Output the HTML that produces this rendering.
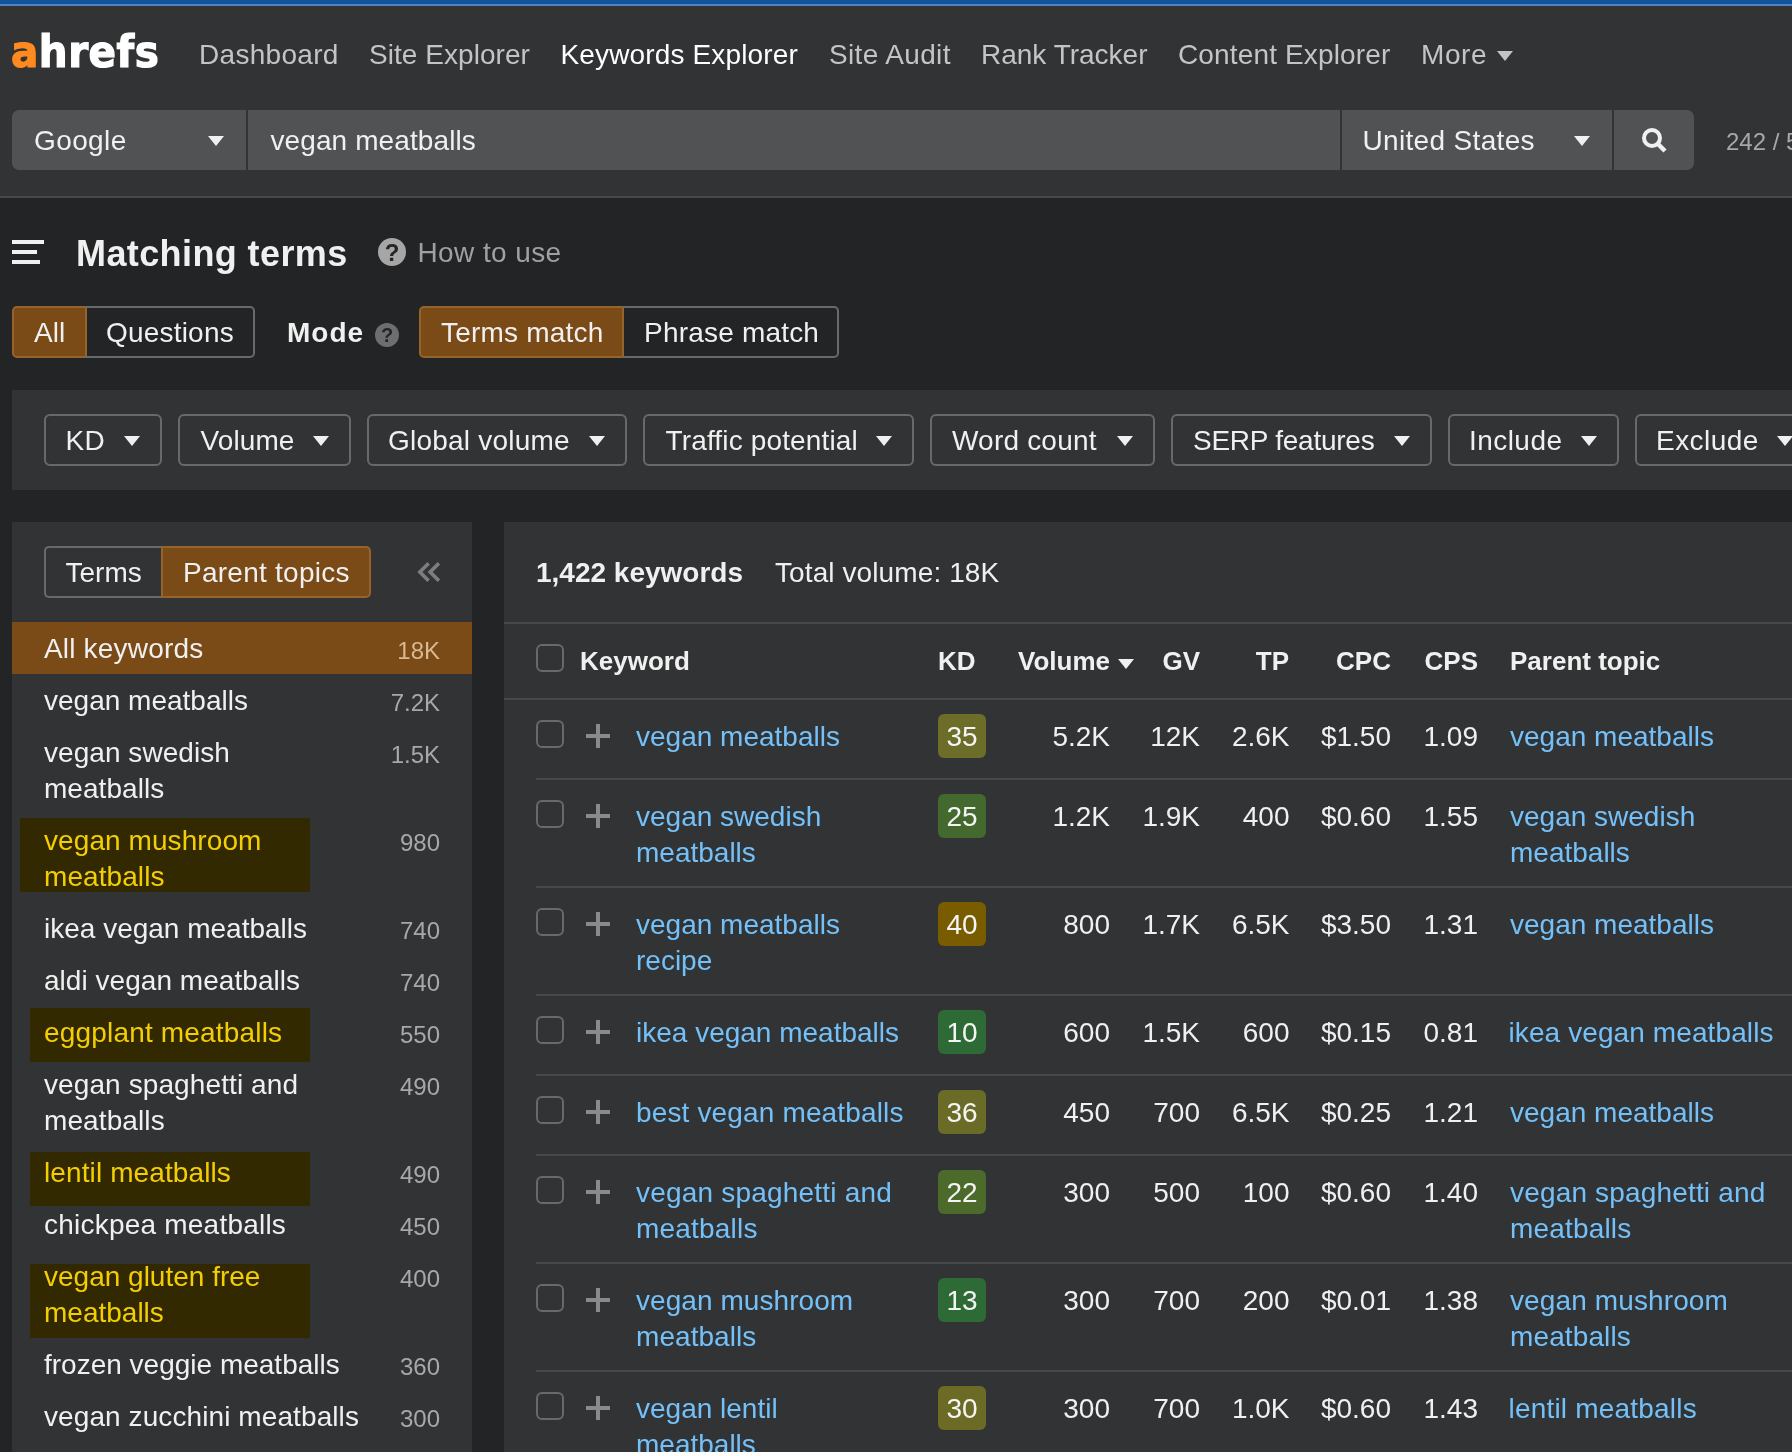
<!DOCTYPE html>
<html><head><meta charset="utf-8"><title>Keywords Explorer</title>
<style>
*{box-sizing:border-box;margin:0;padding:0}
html,body{width:1792px;height:1452px;overflow:hidden;background:#232426}
body{position:relative;font-family:"Liberation Sans",Arial,Helvetica,sans-serif;font-size:28px;color:#f0f0f0;line-height:36px}
.abs{position:absolute}
#app{position:absolute;left:0;top:0;width:1792px;height:1452px;will-change:transform}
.topbar{left:0;top:0;width:1792px;height:6px;background:#13559d;border-bottom:2px solid #4e85c2}
.header{left:0;top:6px;width:1792px;height:192px;background:#323335;border-bottom:2px solid #47484a}
.nav{white-space:nowrap;color:#c4c4c4;line-height:36px}
.nav.act{color:#fff}
.sbox{top:110px;height:60px;background:#515254}
.t{white-space:nowrap;line-height:36px}
.tri{width:0;height:0;border-left:8px solid transparent;border-right:8px solid transparent;border-top:10px solid #f0f0f0}
.seg{height:52px;border:2px solid #68696b}
.seg.on{background:#7a4a17;border-color:#96642b}
.fbtn{top:414px;height:52px;border:2px solid #68696b;border-radius:6px}
.panel{background:#323335}
.q{border-radius:50%;text-align:center;font-weight:bold;color:#242527}
.lrow{left:44px;white-space:nowrap;line-height:36px;color:#f0f0f0}
.lnum{right:1352px;white-space:nowrap;line-height:36px;color:#a8a8a8;font-size:24px;text-align:right}
.hl{background:#322900}
.y{color:#f3ce05}
.hline{height:2px;background:#47484a}
.cb{width:28px;height:28px;border:2px solid #68696b;border-radius:6px;left:536px}
.plus{left:586px;width:24px;height:24px}
.plus:before{content:"";position:absolute;left:0;top:10px;width:24px;height:4px;background:#8a8a8a}
.plus:after{content:"";position:absolute;left:10px;top:0;width:4px;height:24px;background:#8a8a8a}
.kw{left:636px;color:#74c0f8;line-height:36px;white-space:nowrap}
.pt{left:1510px;color:#74c0f8;line-height:36px;white-space:nowrap}
.kd{left:938px;width:48px;height:44px;border-radius:6px}
.kdt{left:938px;width:48px;text-align:center;color:#f4f4f4;line-height:36px}
.num{white-space:nowrap;line-height:36px;text-align:right;color:#f0f0f0}
.th{font-weight:bold;font-size:26px;white-space:nowrap;line-height:36px;color:#f0f0f0}
</style></head><body>
<div id="app">
<div class="abs topbar"></div>
<div class="abs header"></div>
<div class="abs" id="logo" style="left:11px;top:22px;font-family:'DejaVu Sans Condensed','DejaVu Sans','Liberation Sans',sans-serif;font-size:45px;line-height:60px;font-weight:bold;color:#fff;letter-spacing:0.5px;-webkit-text-stroke:1.2px;white-space:nowrap"><span style="color:#ff8a1f">a</span>hrefs</div>
<div class="abs nav" style="left:199px;top:37px;letter-spacing:0.3px">Dashboard</div>
<div class="abs nav" style="left:369px;top:37px;letter-spacing:0.05px">Site Explorer</div>
<div class="abs nav act" style="left:560.5px;top:37px;letter-spacing:0.14px">Keywords Explorer</div>
<div class="abs nav" style="left:829px;top:37px;letter-spacing:0.35px">Site Audit</div>
<div class="abs nav" style="left:981px;top:37px;letter-spacing:0px">Rank Tracker</div>
<div class="abs nav" style="left:1178px;top:37px;letter-spacing:0.15px">Content Explorer</div>
<div class="abs nav" style="left:1421px;top:37px;letter-spacing:0.6px">More</div>
<div class="abs tri" style="left:1497px;top:51px;border-top-color:#c4c4c4"></div>
<div class="abs sbox" style="left:12px;width:234px;border-radius:7px 0 0 7px"></div>
<div class="abs sbox" style="left:248px;width:1092px"></div>
<div class="abs sbox" style="left:1342px;width:270px"></div>
<div class="abs sbox" style="left:1614px;width:80px;border-radius:0 7px 7px 0"></div>
<div class="abs t" style="left:34px;top:123px;letter-spacing:0.4px">Google</div>
<div class="abs t" style="left:270.5px;top:123px;letter-spacing:0.1px">vegan meatballs</div>
<div class="abs t" style="left:1362.5px;top:123px;letter-spacing:0.33px">United States</div>
<div class="abs tri" style="left:208px;top:136px"></div>
<div class="abs tri" style="left:1574px;top:136px"></div>
<svg class="abs" style="left:1640px;top:126px" width="30" height="30" viewBox="0 0 30 30"><circle cx="12" cy="12" r="8" fill="none" stroke="#f0f0f0" stroke-width="4"/><path d="M17.5 17.5 L25 25" stroke="#f0f0f0" stroke-width="4.5"/></svg>
<div class="abs t" style="left:1726px;top:124px;font-size:24px;color:#a8a8a8">242 / 500</div>
<div class="abs" style="left:12px;top:240px;width:32px;height:4px;background:#f0f0f0"></div>
<div class="abs" style="left:12px;top:250px;width:25px;height:4px;background:#f0f0f0"></div>
<div class="abs" style="left:12px;top:260px;width:28px;height:4px;background:#f0f0f0"></div>
<div class="abs t" style="left:76px;top:232px;font-size:36px;line-height:44px;font-weight:bold;letter-spacing:0.4px">Matching terms</div>
<div class="abs q" style="left:378px;top:238px;width:28px;height:28px;background:#a6a6a6;font-size:24px;line-height:29px">?</div>
<div class="abs t" style="left:417.5px;top:235px;color:#a0a0a0;letter-spacing:0.4px">How to use</div>
<div class="abs seg on" style="left:12px;top:306px;width:75px;border-radius:5px 0 0 5px"></div>
<div class="abs seg" style="left:85px;top:306px;width:170px;border-radius:0 5px 5px 0;border-left:0"></div>
<div class="abs t" style="left:34px;top:315px;">All</div>
<div class="abs t" style="left:106px;top:315px;letter-spacing:0.2px">Questions</div>
<div class="abs t" style="left:287px;top:315px;font-weight:bold;letter-spacing:1px">Mode</div>
<div class="abs q" style="left:375px;top:323px;width:24px;height:24px;background:#6e6e70;font-size:20px;line-height:25px">?</div>
<div class="abs seg on" style="left:419px;top:306px;width:205px;border-radius:5px 0 0 5px"></div>
<div class="abs seg" style="left:622px;top:306px;width:217px;border-radius:0 5px 5px 0;border-left:0"></div>
<div class="abs t" style="left:441px;top:315px;letter-spacing:0.2px">Terms match</div>
<div class="abs t" style="left:644px;top:315px;letter-spacing:0.2px">Phrase match</div>
<div class="abs panel" style="left:12px;top:390px;width:1780px;height:100px"></div>
<div class="abs fbtn" style="left:44px;width:118px"></div>
<div class="abs t" style="left:65.5px;top:423px;letter-spacing:0.3px">KD</div>
<div class="abs tri" style="left:124px;top:436px"></div>
<div class="abs fbtn" style="left:178px;width:173px"></div>
<div class="abs t" style="left:200.5px;top:423px;letter-spacing:0.1px">Volume</div>
<div class="abs tri" style="left:313px;top:436px"></div>
<div class="abs fbtn" style="left:367px;width:260px"></div>
<div class="abs t" style="left:388px;top:423px;letter-spacing:0.22px">Global volume</div>
<div class="abs tri" style="left:589px;top:436px"></div>
<div class="abs fbtn" style="left:643px;width:271px"></div>
<div class="abs t" style="left:665.5px;top:423px;letter-spacing:0.15px">Traffic potential</div>
<div class="abs tri" style="left:876px;top:436px"></div>
<div class="abs fbtn" style="left:930px;width:225px"></div>
<div class="abs t" style="left:952px;top:423px;letter-spacing:0.2px">Word count</div>
<div class="abs tri" style="left:1117px;top:436px"></div>
<div class="abs fbtn" style="left:1171px;width:261px"></div>
<div class="abs t" style="left:1193px;top:423px;letter-spacing:-0.25px">SERP features</div>
<div class="abs tri" style="left:1394px;top:436px"></div>
<div class="abs fbtn" style="left:1448px;width:171px"></div>
<div class="abs t" style="left:1469px;top:423px;letter-spacing:0.45px">Include</div>
<div class="abs tri" style="left:1581px;top:436px"></div>
<div class="abs fbtn" style="left:1635px;width:180px"></div>
<div class="abs t" style="left:1656px;top:423px;letter-spacing:0.45px">Exclude</div>
<div class="abs tri" style="left:1777px;top:436px"></div>
<div class="abs panel" style="left:12px;top:522px;width:460px;height:930px"></div>
<div class="abs seg" style="left:44px;top:546px;width:119px;border-radius:5px 0 0 5px;border-right:0"></div>
<div class="abs seg on" style="left:161px;top:546px;width:210px;border-radius:0 5px 5px 0"></div>
<div class="abs t" style="left:65.5px;top:555px;">Terms</div>
<div class="abs t" style="left:183px;top:555px;letter-spacing:0.25px">Parent topics</div>
<svg class="abs" style="left:410px;top:556px" width="40" height="32" viewBox="410 556 40 32"><path d="M428.6 563.3 L419.9 572 L428.6 580.7 M438.9 563.3 L430.2 572 L438.9 580.7" fill="none" stroke="#7d7d7f" stroke-width="3.7"/></svg>
<div class="abs" style="left:12px;top:622px;width:460px;height:52px;background:#7a4a17"></div>
<div class="abs hl" style="left:20px;top:818px;width:290px;height:74px"></div>
<div class="abs hl" style="left:30px;top:1008px;width:280px;height:54px"></div>
<div class="abs hl" style="left:30px;top:1152px;width:280px;height:54px"></div>
<div class="abs hl" style="left:30px;top:1264px;width:280px;height:74px"></div>
<div class="abs lrow" style="left:44px;top:631px;letter-spacing:0.18px">All keywords</div>
<div class="abs lnum" style="right:1352px;top:633px;color:#d9b98f">18K</div>
<div class="abs lrow" style="left:44px;top:683px;">vegan meatballs</div>
<div class="abs lnum" style="right:1352px;top:685px;">7.2K</div>
<div class="abs lrow" style="left:44px;top:735px;letter-spacing:0.05px">vegan swedish<br>meatballs</div>
<div class="abs lnum" style="right:1352px;top:737px;">1.5K</div>
<div class="abs lrow y" style="left:44px;top:823px;letter-spacing:0.08px">vegan mushroom<br>meatballs</div>
<div class="abs lnum" style="right:1352px;top:825px;">980</div>
<div class="abs lrow" style="left:44px;top:911px;">ikea vegan meatballs</div>
<div class="abs lnum" style="right:1352px;top:913px;">740</div>
<div class="abs lrow" style="left:44px;top:963px;letter-spacing:0.04px">aldi vegan meatballs</div>
<div class="abs lnum" style="right:1352px;top:965px;">740</div>
<div class="abs lrow y" style="left:44px;top:1015px;letter-spacing:0.18px">eggplant meatballs</div>
<div class="abs lnum" style="right:1352px;top:1017px;">550</div>
<div class="abs lrow" style="left:44px;top:1067px;letter-spacing:0.1px">vegan spaghetti and<br>meatballs</div>
<div class="abs lnum" style="right:1352px;top:1069px;">490</div>
<div class="abs lrow y" style="left:44px;top:1155px;letter-spacing:0.11px">lentil meatballs</div>
<div class="abs lnum" style="right:1352px;top:1157px;">490</div>
<div class="abs lrow" style="left:44px;top:1207px;letter-spacing:0.22px">chickpea meatballs</div>
<div class="abs lnum" style="right:1352px;top:1209px;">450</div>
<div class="abs lrow y" style="left:44px;top:1259px;">vegan gluten free<br>meatballs</div>
<div class="abs lnum" style="right:1352px;top:1261px;">400</div>
<div class="abs lrow" style="left:44px;top:1347px;">frozen veggie meatballs</div>
<div class="abs lnum" style="right:1352px;top:1349px;">360</div>
<div class="abs lrow" style="left:44px;top:1399px;letter-spacing:0.09px">vegan zucchini meatballs</div>
<div class="abs lnum" style="right:1352px;top:1401px;">300</div>
<div class="abs panel" style="left:504px;top:522px;width:1288px;height:930px"></div>
<div class="abs t" style="left:536px;top:555px;font-weight:bold">1,422 keywords</div>
<div class="abs t" style="left:775px;top:555px;letter-spacing:0.1px">Total volume: 18K</div>
<div class="abs hline" style="left:504px;top:622px;width:1288px"></div>
<div class="abs hline" style="left:504px;top:698px;width:1288px"></div>
<div class="abs cb" style="top:644px"></div>
<div class="abs th" style="left:580px;top:643px;">Keyword</div>
<div class="abs th" style="left:938px;top:643px;">KD</div>
<div class="abs th" style="left:1018px;top:643px;">Volume</div>
<div class="abs tri" style="left:1118px;top:659px;border-top-width:10px"></div>
<div class="abs th" style="right:592px;top:643px;">GV</div>
<div class="abs th" style="right:503px;top:643px;">TP</div>
<div class="abs th" style="right:401px;top:643px;">CPC</div>
<div class="abs th" style="right:314px;top:643px;">CPS</div>
<div class="abs th" style="left:1510px;top:643px;">Parent topic</div>
<div class="abs cb" style="top:720px"></div><div class="abs plus" style="top:724px"></div><div class="abs kd" style="top:714px;background:#6b6d28"></div>
<div class="abs kw" style="left:636px;top:719px;">vegan meatballs</div>
<div class="abs kdt" style="left:938px;top:719px;">35</div>
<div class="abs num" style="right:682px;top:719px;">5.2K</div>
<div class="abs num" style="right:592px;top:719px;">12K</div>
<div class="abs num" style="right:502.5px;top:719px;">2.6K</div>
<div class="abs num" style="right:401px;top:719px;">$1.50</div>
<div class="abs num" style="right:314px;top:719px;">1.09</div>
<div class="abs pt" style="left:1510px;top:719px;">vegan meatballs</div>
<div class="abs hline" style="left:536px;top:778px;width:1256px"></div>
<div class="abs cb" style="top:800px"></div><div class="abs plus" style="top:804px"></div><div class="abs kd" style="top:794px;background:#43692e"></div>
<div class="abs kw" style="left:636px;top:799px;">vegan swedish<br>meatballs</div>
<div class="abs kdt" style="left:938px;top:799px;">25</div>
<div class="abs num" style="right:682px;top:799px;">1.2K</div>
<div class="abs num" style="right:592px;top:799px;">1.9K</div>
<div class="abs num" style="right:502.5px;top:799px;">400</div>
<div class="abs num" style="right:401px;top:799px;">$0.60</div>
<div class="abs num" style="right:314px;top:799px;">1.55</div>
<div class="abs pt" style="left:1510px;top:799px;">vegan swedish<br>meatballs</div>
<div class="abs hline" style="left:536px;top:886px;width:1256px"></div>
<div class="abs cb" style="top:908px"></div><div class="abs plus" style="top:912px"></div><div class="abs kd" style="top:902px;background:#7a5c00"></div>
<div class="abs kw" style="left:636px;top:907px;">vegan meatballs<br>recipe</div>
<div class="abs kdt" style="left:938px;top:907px;">40</div>
<div class="abs num" style="right:682px;top:907px;">800</div>
<div class="abs num" style="right:592px;top:907px;">1.7K</div>
<div class="abs num" style="right:502.5px;top:907px;">6.5K</div>
<div class="abs num" style="right:401px;top:907px;">$3.50</div>
<div class="abs num" style="right:314px;top:907px;">1.31</div>
<div class="abs pt" style="left:1510px;top:907px;">vegan meatballs</div>
<div class="abs hline" style="left:536px;top:994px;width:1256px"></div>
<div class="abs cb" style="top:1016px"></div><div class="abs plus" style="top:1020px"></div><div class="abs kd" style="top:1010px;background:#2d6a35"></div>
<div class="abs kw" style="left:636px;top:1015px;">ikea vegan meatballs</div>
<div class="abs kdt" style="left:938px;top:1015px;">10</div>
<div class="abs num" style="right:682px;top:1015px;">600</div>
<div class="abs num" style="right:592px;top:1015px;">1.5K</div>
<div class="abs num" style="right:502.5px;top:1015px;">600</div>
<div class="abs num" style="right:401px;top:1015px;">$0.15</div>
<div class="abs num" style="right:314px;top:1015px;">0.81</div>
<div class="abs pt" style="left:1508.5px;top:1015px;letter-spacing:0.1px">ikea vegan meatballs</div>
<div class="abs hline" style="left:536px;top:1074px;width:1256px"></div>
<div class="abs cb" style="top:1096px"></div><div class="abs plus" style="top:1100px"></div><div class="abs kd" style="top:1090px;background:#6b6b28"></div>
<div class="abs kw" style="left:636px;top:1095px;letter-spacing:0.15px">best vegan meatballs</div>
<div class="abs kdt" style="left:938px;top:1095px;">36</div>
<div class="abs num" style="right:682px;top:1095px;">450</div>
<div class="abs num" style="right:592px;top:1095px;">700</div>
<div class="abs num" style="right:502.5px;top:1095px;">6.5K</div>
<div class="abs num" style="right:401px;top:1095px;">$0.25</div>
<div class="abs num" style="right:314px;top:1095px;">1.21</div>
<div class="abs pt" style="left:1510px;top:1095px;">vegan meatballs</div>
<div class="abs hline" style="left:536px;top:1154px;width:1256px"></div>
<div class="abs cb" style="top:1176px"></div><div class="abs plus" style="top:1180px"></div><div class="abs kd" style="top:1170px;background:#4c6a2a"></div>
<div class="abs kw" style="left:636px;top:1175px;letter-spacing:0.2px">vegan spaghetti and<br>meatballs</div>
<div class="abs kdt" style="left:938px;top:1175px;">22</div>
<div class="abs num" style="right:682px;top:1175px;">300</div>
<div class="abs num" style="right:592px;top:1175px;">500</div>
<div class="abs num" style="right:502.5px;top:1175px;">100</div>
<div class="abs num" style="right:401px;top:1175px;">$0.60</div>
<div class="abs num" style="right:314px;top:1175px;">1.40</div>
<div class="abs pt" style="left:1510px;top:1175px;letter-spacing:0.17px">vegan spaghetti and<br>meatballs</div>
<div class="abs hline" style="left:536px;top:1262px;width:1256px"></div>
<div class="abs cb" style="top:1284px"></div><div class="abs plus" style="top:1288px"></div><div class="abs kd" style="top:1278px;background:#2d6a35"></div>
<div class="abs kw" style="left:636px;top:1283px;letter-spacing:0.06px">vegan mushroom<br>meatballs</div>
<div class="abs kdt" style="left:938px;top:1283px;">13</div>
<div class="abs num" style="right:682px;top:1283px;">300</div>
<div class="abs num" style="right:592px;top:1283px;">700</div>
<div class="abs num" style="right:502.5px;top:1283px;">200</div>
<div class="abs num" style="right:401px;top:1283px;">$0.01</div>
<div class="abs num" style="right:314px;top:1283px;">1.38</div>
<div class="abs pt" style="left:1510px;top:1283px;letter-spacing:0.12px">vegan mushroom<br>meatballs</div>
<div class="abs hline" style="left:536px;top:1370px;width:1256px"></div>
<div class="abs cb" style="top:1392px"></div><div class="abs plus" style="top:1396px"></div><div class="abs kd" style="top:1386px;background:#6b6b25"></div>
<div class="abs kw" style="left:636px;top:1391px;">vegan lentil<br>meatballs</div>
<div class="abs kdt" style="left:938px;top:1391px;">30</div>
<div class="abs num" style="right:682px;top:1391px;">300</div>
<div class="abs num" style="right:592px;top:1391px;">700</div>
<div class="abs num" style="right:502.5px;top:1391px;">1.0K</div>
<div class="abs num" style="right:401px;top:1391px;">$0.60</div>
<div class="abs num" style="right:314px;top:1391px;">1.43</div>
<div class="abs pt" style="left:1508.5px;top:1391px;letter-spacing:0.2px">lentil meatballs</div>
<div class="abs hline" style="left:536px;top:1478px;width:1256px"></div>
</div>
</body></html>
